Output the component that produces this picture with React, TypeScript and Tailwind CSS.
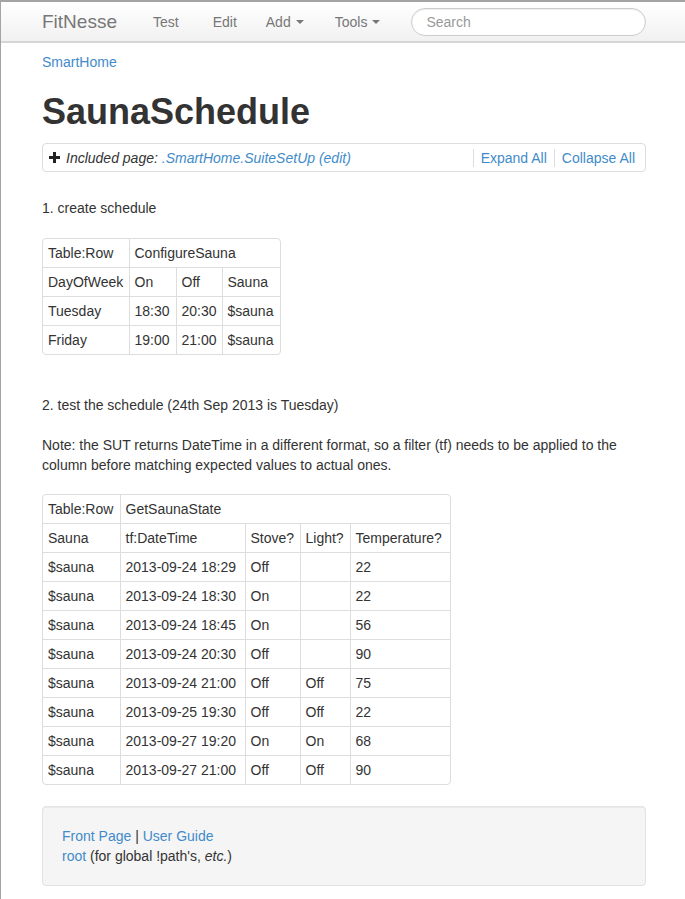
import React from "react";

const link = "text-[#428bca]";

const Caret = () => (
  <span className="ml-[5px] inline-block h-0 w-0 border-x-[4px] border-t-[4px] border-x-transparent border-t-[#777] align-middle" />
);

const Cell = ({ children, colSpan }: { children?: React.ReactNode; colSpan?: number }) => (
  <td
    colSpan={colSpan}
    className="border-r border-b border-[#ddd] px-[5px] py-[4px] whitespace-nowrap last:border-r-0"
  >
    {children}
  </td>
);

const Table = ({
  head,
  rows,
  cols,
  width,
}: {
  head: [string, string, number];
  rows: string[][];
  cols: string[];
  width: string;
}) => (
  <div className="w-fit overflow-hidden rounded-[4px] border border-[#ddd]">
    <table className={`table-fixed border-collapse ${width}`}>
      <colgroup>
        {cols.map((c, i) => (
          <col key={i} className={c} />
        ))}
      </colgroup>
      <tbody>
        <tr>
          <Cell>{head[0]}</Cell>
          <Cell colSpan={head[2]}>{head[1]}</Cell>
        </tr>
        {rows.map((r, i) => (
          <tr key={i} className="[&:last-child>td]:border-b-0">
            {r.map((c, j) => (
              <Cell key={j}>{c}</Cell>
            ))}
          </tr>
        ))}
      </tbody>
    </table>
  </div>
);

const stateRows = [
  ["Sauna", "tf:DateTime", "Stove?", "Light?", "Temperature?"],
  ["$sauna", "2013-09-24 18:29", "Off", "", "22"],
  ["$sauna", "2013-09-24 18:30", "On", "", "22"],
  ["$sauna", "2013-09-24 18:45", "On", "", "56"],
  ["$sauna", "2013-09-24 20:30", "Off", "", "90"],
  ["$sauna", "2013-09-24 21:00", "Off", "Off", "75"],
  ["$sauna", "2013-09-25 19:30", "Off", "Off", "22"],
  ["$sauna", "2013-09-27 19:20", "On", "On", "68"],
  ["$sauna", "2013-09-27 21:00", "Off", "Off", "90"],
];

export default function App() {
  return (
    <div className="min-h-[899px] border-t-2 border-l border-[#a4a4a4] bg-white font-['Liberation_Sans',Arial,sans-serif] text-[14px] leading-[20px] text-[#333]">
      {/* navbar */}
      <div className="flex h-[41px] items-center border-b-2 border-[#d6d6d6] bg-gradient-to-b from-white to-[#f1f1f1] pl-[41px]">
        <span className="text-[19px] text-[#777]">FitNesse</span>
        <div className="ml-[36px] flex items-center text-[#777]">
          <span>Test</span>
          <span className="ml-[34px]">Edit</span>
          <span className="ml-[29px] flex items-center">Add<Caret /></span>
          <span className="ml-[31px] flex items-center">Tools<Caret /></span>
        </div>
        <div className="ml-[31px] flex h-[28px] w-[235px] items-center rounded-full border border-[#ccc] bg-white px-[14px] text-[#999] shadow-[inset_0_1px_1px_rgba(0,0,0,0.075)]">
          Search
        </div>
      </div>

      <div className="px-[41px]">
        <div className="mt-[9px]">
          <span className={link}>SmartHome</span>
        </div>
        <h1 className="mt-[20px] text-[36px] leading-[40px] font-bold">SaunaSchedule</h1>

        <div className="mt-[11px] flex h-[29px] w-[604px] items-center rounded-[4px] border border-[#ddd] pl-[6px]">
          <svg width="11" height="11" viewBox="0 0 11 11" className="mr-[6px]">
            <path d="M4 0h3v4h4v3H7v4H4V7H0V4h4z" fill="#222" />
          </svg>
          <span className="italic">
            Included page: <span className={link}>.SmartHome.SuiteSetUp (edit)</span>
          </span>
          <div className="ml-auto flex items-center">
            <span className="h-[18px] border-l border-[#ddd]" />
            <span className={`${link} px-[7px]`}>Expand All</span>
            <span className="h-[18px] border-l border-[#ddd]" />
            <span className={`${link} pl-[7px] pr-[10px]`}>Collapse All</span>
          </div>
        </div>

        <p className="mt-[26px]">1. create schedule</p>
        <div className="mt-[20px]">
          <Table
            head={["Table:Row", "ConfigureSauna", 3]}
            width="w-[237px]"
            cols={["w-[86px]", "w-[47px]", "w-[46px]", "w-[58px]"]}
            rows={[
              ["DayOfWeek", "On", "Off", "Sauna"],
              ["Tuesday", "18:30", "20:30", "$sauna"],
              ["Friday", "19:00", "21:00", "$sauna"],
            ]}
          />
        </div>

        <p className="mt-[40px]">2. test the schedule (24th Sep 2013 is Tuesday)</p>
        <p className="mt-[20px]">
          Note: the SUT returns DateTime in a different format, so a filter (tf) needs to be applied to the
          column before matching expected values to actual ones.
        </p>
        <div className="mt-[19px]">
          <Table
            head={["Table:Row", "GetSaunaState", 4]}
            width="w-[407px]"
            cols={["w-[77px]", "w-[125px]", "w-[55px]", "w-[50px]", "w-[100px]"]}
            rows={stateRows}
          />
        </div>

        <div className="mt-[21px] w-[604px] rounded-[4px] border border-[#e3e3e3] bg-[#f5f5f5] p-[19px] shadow-[inset_0_1px_1px_rgba(0,0,0,0.05)]">
          <div>
            <span className={link}>Front Page</span> | <span className={link}>User Guide</span>
          </div>
          <div>
            <span className={link}>root</span> (for global !path's, <i>etc.</i>)
          </div>
        </div>
      </div>
    </div>
  );
}
